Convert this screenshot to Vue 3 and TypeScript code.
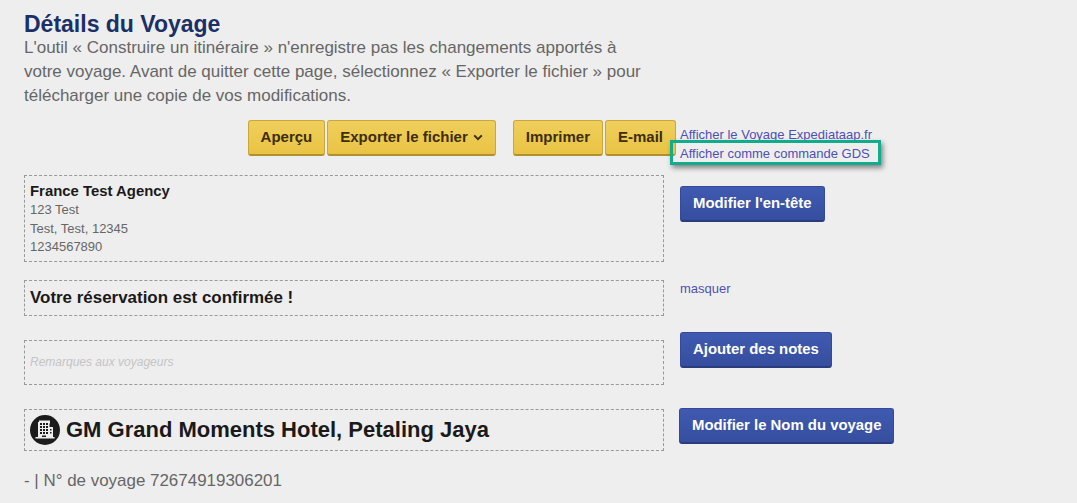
<script setup lang="ts">
const intro = "L'outil « Construire un itinéraire » n'enregistre pas les changements apportés à votre voyage. Avant de quitter cette page, sélectionnez « Exporter le fichier » pour télécharger une copie de vos modifications.";
const addressLines: string[] = ['123 Test', 'Test, Test, 12345', '1234567890'];
</script>

<template>
  <main class="page">
    <h1 class="title">Détails du Voyage</h1>
    <p class="intro">{{ intro }}</p>

    <div class="toolbar">
      <div class="actions">
        <button class="btn gold">Aperçu</button>
        <button class="btn gold export">
          Exporter le fichier
          <svg class="chev" width="10" height="7" viewBox="0 0 10 7"><path d="M1.2 1.4 5 5.2l3.8-3.8" fill="none" stroke="currentColor" stroke-width="2" /></svg>
        </button>
        <button class="btn gold spaced">Imprimer</button>
        <button class="btn gold">E-mail</button>
      </div>
      <div class="links">
        <a class="link">Afficher le Voyage Expediataap.fr</a>
        <a class="link">Afficher comme commande GDS</a>
        <span class="highlight"></span>
      </div>
    </div>

    <section class="row row-agency">
      <div class="box agency">
        <strong class="agency-name">France Test Agency</strong>
        <div v-for="line in addressLines" :key="line" class="addr">{{ line }}</div>
      </div>
      <div class="side"><button class="btn blue">Modifier l'en-tête</button></div>
    </section>

    <section class="row row-confirm">
      <div class="box confirm">Votre réservation est confirmée !</div>
      <div class="side"><a class="link masquer">masquer</a></div>
    </section>

    <section class="row row-notes">
      <div class="box notes">Remarques aux voyageurs</div>
      <div class="side"><button class="btn blue">Ajouter des notes</button></div>
    </section>

    <section class="row row-name">
      <div class="box name">
        <svg class="hotel" width="30" height="30" viewBox="0 0 30 30">
          <circle cx="15" cy="15" r="15" fill="#1c1c1c" />
          <path fill="#eee" fill-rule="evenodd" d="M9 5.500h11v3h-.500V12H23v10h1.500v1.500h-19V22H8V7H9V5.500ZM10 8v2h2V8h-2Zm3 0v2h2V8h-2Zm3 0v2h2V8h-2Zm-6 3v2h2v-2h-2Zm3 0v2h2v-2h-2Zm3 0v2h2v-2h-2Zm-6 3v2h2v-2h-2Zm3 0v2h2v-2h-2Zm3 0v2h2v-2h-2Zm-6 3v2h2v-2h-2Zm3 0v2h2v-2h-2Zm3 0v2h2v-2h-2Zm4-3v1.500h1.500V14H20Zm0 3v1.500h1.500V17H20Zm-8 3.500V22h4v-1.500h-4Z" />
        </svg>
        <span>GM Grand Moments Hotel, Petaling Jaya</span>
      </div>
      <div class="side side-name"><button class="btn blue">Modifier le Nom du voyage</button></div>
    </section>

    <p class="trip">- | N° de voyage 72674919306201</p>
  </main>
</template>

<style>
html, body { margin: 0; background: #eee; }
</style>

<style scoped>
.page {
  box-sizing: border-box;
  width: 1077px;
  height: 503px;
  overflow: hidden;
  padding: 12px 0 0 24px;
  background: #eee;
  font-family: "Liberation Sans", Arial, sans-serif;
  color: #666;
}
.title {
  margin: 0;
  font-size: 23px;
  line-height: 24px;
  font-weight: 700;
  color: #1c2f66;
}
.intro {
  margin: 0;
  width: 630px;
  font-size: 17px;
  line-height: 24px;
  color: #666;
}
.toolbar {
  display: flex;
  width: 860px;
  margin-top: 12px;
}
.actions {
  display: flex;
  width: 652px;
  justify-content: flex-end;
  gap: 2px;
}
.btn {
  box-sizing: border-box;
  height: 36px;
  padding: 0 12px 2px;
  border-radius: 3px;
  font-family: "Liberation Sans", Arial, sans-serif;
  font-weight: 700;
  white-space: nowrap;
}
.gold {
  border: 1px solid #c9a73c;
  border-bottom: 2px solid #b0912e;
  background: linear-gradient(#efcf5c, #e9c344);
  color: #3d2e06;
  font-size: 15px;
}
.export { display: flex; align-items: center; gap: 5px; }
.chev { margin-top: 1px; }
.spaced { margin-left: 15px; }
.blue {
  border: 1px solid #34499a;
  border-bottom: 2px solid #2a3b7e;
  background: linear-gradient(#3f5ab0, #364e9f);
  color: #fff;
  font-size: 14.900px;
}
.links {
  position: relative;
  display: flex;
  flex-direction: column;
  margin: 5px 0 0 4px;
}
.link {
  font-size: 13px;
  line-height: 19px;
  color: #4f50b6;
  white-space: nowrap;
}
.highlight {
  position: absolute;
  left: -10px;
  top: 15px;
  width: 211px;
  height: 25px;
  box-sizing: border-box;
  border: 3px solid #10ac8c;
  box-shadow: 2px 3px 5px rgba(0, 0, 0, 0.45);
  pointer-events: none;
}
.row { display: flex; align-items: flex-start; }
.box {
  box-sizing: border-box;
  width: 640px;
  border: 1px dashed #999;
  padding: 0 5px;
}
.side { margin-left: 16px; }
.row-agency { margin-top: 12px; }
.agency { height: 87px; padding-top: 7px; }
.agency-name {
  display: block;
  font-size: 14.900px;
  line-height: 17px;
  color: #1a1a1a;
  margin-bottom: 1px;
}
.addr { font-size: 13px; line-height: 18.500px; color: #666; }
.row-agency .side { margin-top: 11px; }
.row-confirm { margin-top: 18px; }
.confirm {
  height: 36px;
  font-size: 16.950px;
  font-weight: 700;
  line-height: 33px;
  color: #1a1a1a;
}
.masquer { display: block; margin-top: 0; line-height: 18px; }
.row-notes { margin-top: 24px; }
.notes {
  height: 45px;
  font-size: 12px;
  font-style: italic;
  line-height: 42px;
  color: #c4c4c4;
}
.row-notes .side { margin-top: -8px; }
.row-name { margin-top: 24px; }
.name {
  display: flex;
  align-items: center;
  gap: 6px;
  height: 42px;
  font-size: 22px;
  font-weight: 700;
  color: #1a1a1a;
}
.hotel { flex: none; }
.side-name { margin-left: 15px; margin-top: -1px; }
.trip {
  margin: 20px 0 0;
  font-size: 16.950px;
  line-height: 20px;
  color: #666;
}
</style>
